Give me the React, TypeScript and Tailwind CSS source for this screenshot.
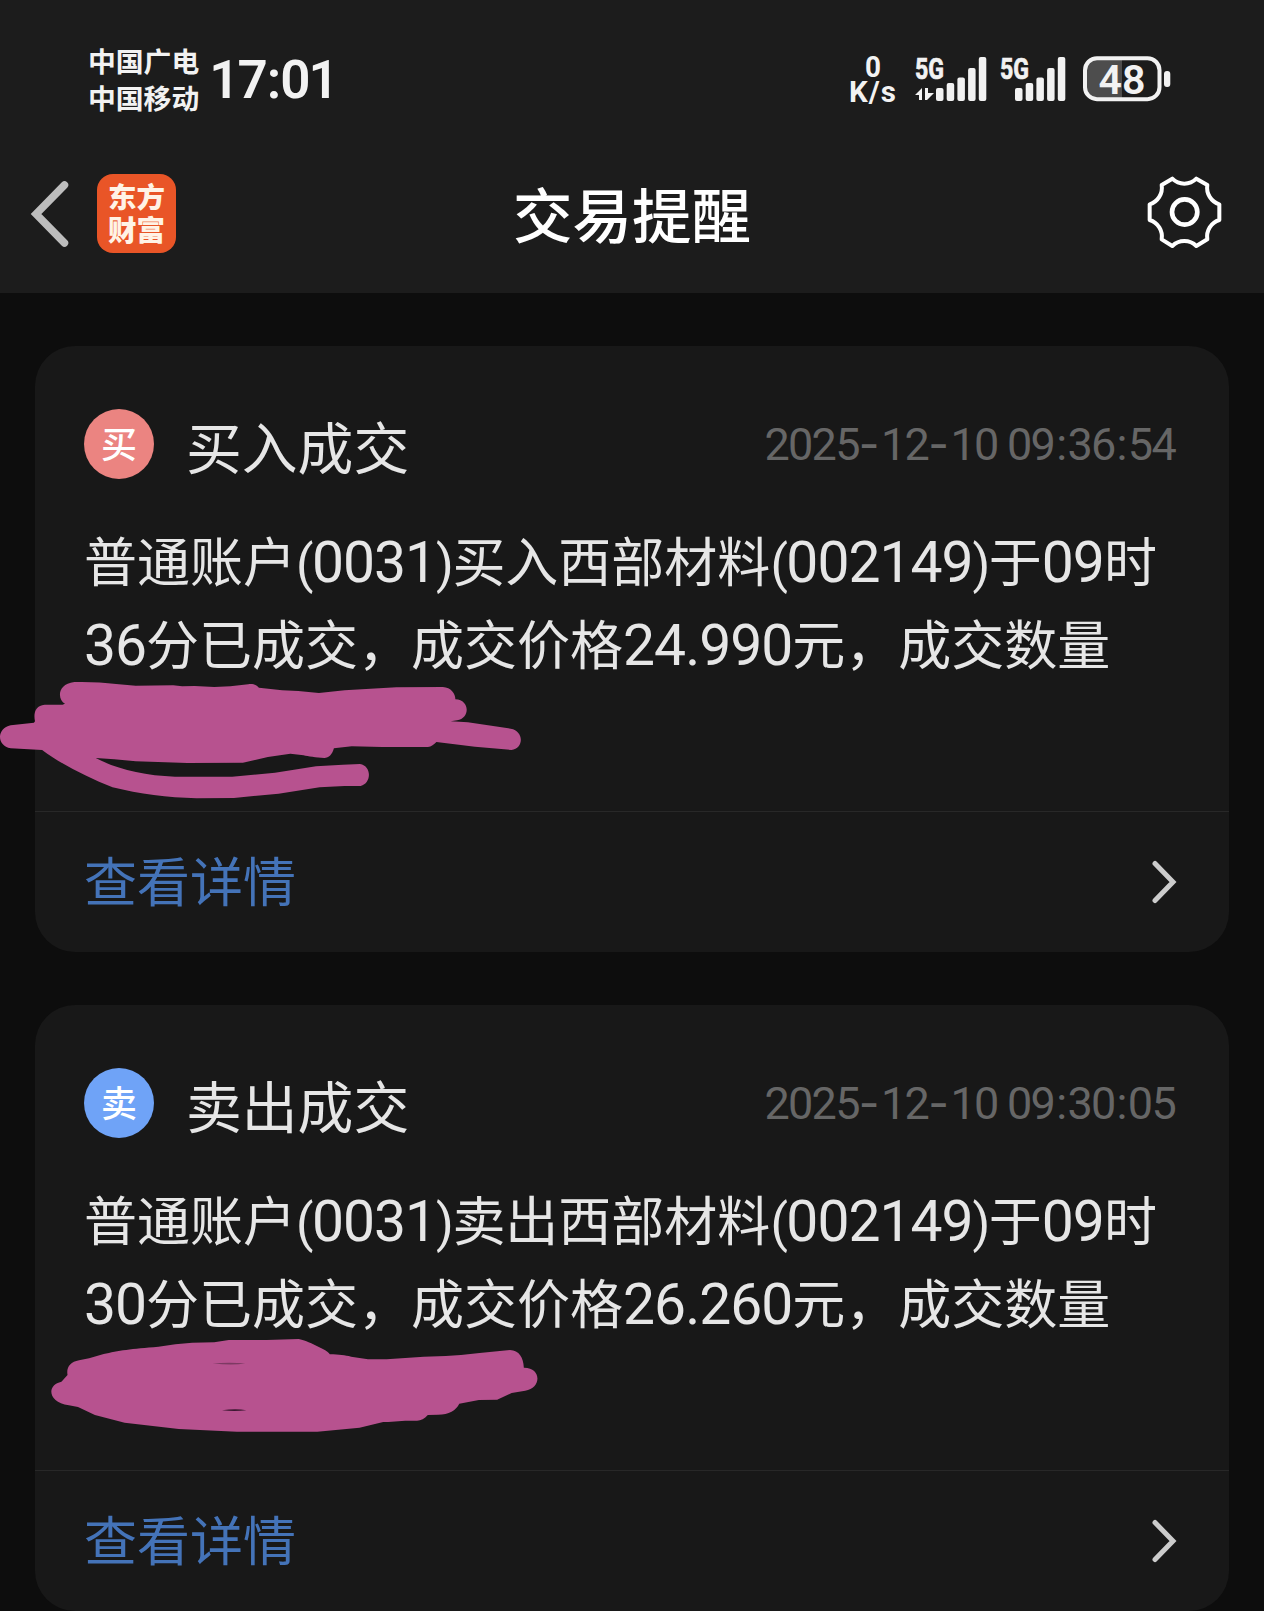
import type { ReactNode } from "react";

type Trade = {
  badge: string;
  badgeClass: string;
  title: string;
  time: string;
  lines: string[];
  scribble: ReactNode;
};

// Digits and brackets are set in Roboto, everything else in the CJK face
function MixedText({ text }: { text: string }) {
  const runs = text.split(/([()]|[0-9.]+)/).filter(Boolean);
  return (
    <>
      {runs.map((run, i) => {
        if (/^[()]$/.test(run)) {
          return (
            <span key={i} className="font-[Roboto,sans-serif] text-[51px] leading-none tracking-[-1.5px]">
              {run}
            </span>
          );
        }
        if (/^[0-9.]+$/.test(run)) {
          return (
            <span key={i} className="font-[Roboto,sans-serif] text-[57px] leading-none tracking-[-1px]">
              {run}
            </span>
          );
        }
        return <span key={i}>{run}</span>;
      })}
    </>
  );
}

function TimeText({ text }: { text: string }) {
  return (
    <span className="whitespace-nowrap pt-[1px] font-[Roboto,sans-serif] text-[45px] leading-[70px] tracking-[-1.7px] text-[#666666]">
      {text.split(/([-:])/).map((part, i) => {
        if (part === "-") {
          return (
            <span key={i} className="font-[Inter,sans-serif] leading-none tracking-[1.5px]">
              -
            </span>
          );
        }
        return (
          <span key={i} className={part === ":" ? "px-[2px]" : ""}>
            {part}
          </span>
        );
      })}
    </span>
  );
}

function BuyScribble() {
  return (
    <svg
      className="absolute left-[-35px] top-[314px]"
      width="560"
      height="160"
      viewBox="0 0 1568 480"
      preserveAspectRatio="none"
      fill="#b7528f"
    >
      <path d="M182 131C160 118 160 72 208 66C250 65 290 67 325 72L380 77L485 76L510 79L545 78L600 81L645 79L695 73C708 70 719 76 725 83L790 91L835 93L893 99L965 91L1110 82L1240 81C1263 83 1275 100 1275 118C1317 120 1316 175 1280 181L1262 184L1310 187L1430 206C1468 213 1467 266 1432 270L1330 260L1222 246C1215 254 1208 260 1198 261L1070 261L985 259L935 265C930 284 921 294 908 294C885 293 862 289 850 286L813 281L750 291L680 308L525 309L380 304L320 298L268 294C320 324 400 347 490 350L650 350L770 338L885 319L960 314L1008 312C1042 318 1040 370 1010 378L965 378L895 382L780 401L655 414L550 415C470 413 390 402 315 382C245 352 175 315 118 270L30 265C-10 258 -10 205 30 196L95 188L98 184C93 158 100 136 125 134L175 134Z" />
    </svg>
  );
}

function SellScribble() {
  return (
    <svg
      className="absolute left-[-5px] top-[315px]"
      width="530"
      height="130"
      viewBox="0 0 1568 390"
      preserveAspectRatio="none"
      fill="#b7528f"
    >
      <path d="M111 165C107 142 119 126 145 121L175 115L218 102C260 92 300 86 380 80L430 73L480 68L545 67L588 60L700 60L795 57C812 61 822 65 832 70L865 86C878 93 884 97 887 103C915 103 932 106 950 110L1000 118L1055 118L1165 110L1230 108L1275 105L1330 99L1420 90C1447 91 1460 113 1461 143C1514 142 1514 205 1465 212L1425 219L1382 239L1328 240L1270 251C1260 271 1240 284 1207 284L1177 285C1166 298 1155 303 1142 302L1110 302L1060 306L1045 306L975 323L850 335L612 335L440 327L280 308L192 285L142 261L115 256C50 245 50 194 93 185Z" />
      <path d="M540 130Q590 127 637 130Q600 137 540 130Z" fill="#7d3a63" />
      <path d="M568 271Q610 265 640 271Q605 275 568 271Z" fill="#3a1730" />
    </svg>
  );
}

const trades: Trade[] = [
  {
    badge: "买",
    badgeClass: "bg-[#eb8481]",
    title: "买入成交",
    time: "2025-12-10 09:36:54",
    lines: ["普通账户(0031)买入西部材料(002149)于09时", "36分已成交，成交价格24.990元，成交数量"],
    scribble: <BuyScribble />,
  },
  {
    badge: "卖",
    badgeClass: "bg-[#6fa3f7]",
    title: "卖出成交",
    time: "2025-12-10 09:30:05",
    lines: ["普通账户(0031)卖出西部材料(002149)于09时", "30分已成交，成交价格26.260元，成交数量"],
    scribble: <SellScribble />,
  },
];

function Signal({ arrows = false }: { arrows?: boolean }) {
  const x = arrows ? 21 : 15;
  return (
    <svg
      width={arrows ? 72 : 66}
      height="46"
      viewBox={arrows ? "0 0 72 46" : "0 0 66 46"}
      fill="#f2f2f2"
      className="overflow-visible"
    >
      <text
        x="0"
        y="22.5"
        textLength="29"
        lengthAdjust="spacingAndGlyphs"
        stroke="#f2f2f2"
        strokeWidth="0.7"
        className="font-[Roboto,sans-serif] text-[30px] font-bold"
      >
        5G
      </text>
      {arrows && <path d="M0 39L7 32V44H4V39ZM10 32H13V37H19L12 44H10Z" />}
      <rect x={x} y="32" width="7.5" height="13" rx="2" />
      <rect x={x + 10.7} y="27" width="7.5" height="18" rx="2" />
      <rect x={x + 21.4} y="21.5" width="7.5" height="23.5" rx="2" />
      <rect x={x + 32.1} y="12" width="7.5" height="33" rx="2" />
      <rect x={x + 42.8} y="1" width="7.5" height="44" rx="2" />
    </svg>
  );
}

function Battery() {
  return (
    <svg width="88" height="46" viewBox="0 0 88 46" className="overflow-visible">
      <path d="M14 3H39V43H14A11 11 0 0 1 3 32V14A11 11 0 0 1 14 3Z" fill="#4d4d4d" />
      <rect x="2" y="2.2" width="74.5" height="41" rx="12" fill="none" stroke="#f2f2f2" strokeWidth="4" />
      <rect x="81" y="15" width="6.3" height="16" rx="3" fill="#f2f2f2" />
      <text
        x="15.5"
        y="37.7"
        textLength="47"
        lengthAdjust="spacingAndGlyphs"
        fill="#f2f2f2"
        className="font-[Roboto,sans-serif] text-[41px] font-semibold"
      >
        48
      </text>
    </svg>
  );
}

function StatusBar() {
  return (
    <div className="flex h-[150px] items-start pl-[88px] text-[#f2f2f2]">
      <div className="mt-[42px] text-[27.8px] font-bold leading-[37px]">
        <div>中国广电</div>
        <div>中国移动</div>
      </div>
      <div className="ml-[10px] mt-[50px] font-[Roboto,sans-serif] text-[53px] font-semibold leading-[60px] tracking-[-2px]">
        17<span className="px-[1px]">:</span>01
      </div>
      <div className="ml-auto mr-[93px] flex pt-[56px]">
        <svg width="48" height="48" viewBox="0 0 48 48" fill="#f2f2f2" className="mr-[17px] overflow-visible">
          <text x="15" y="21" className="font-[Roboto,sans-serif] text-[29px] font-bold" textLength="16" lengthAdjust="spacingAndGlyphs">
            0
          </text>
          <text x="-1" y="45.5" className="font-[Roboto,sans-serif] text-[29.5px] font-bold" textLength="47" lengthAdjust="spacing">
            K/s
          </text>
        </svg>
        <Signal arrows />
        <div className="ml-[13px]">
          <Signal />
        </div>
        <div className="ml-[17px]">
          <Battery />
        </div>
      </div>
    </div>
  );
}

function TitleBar() {
  return (
    <div className="grid h-[143px] grid-cols-[1fr_auto_1fr] items-start">
      <div className="flex items-center pl-[30px] pt-[24px]">
        <svg width="40" height="70" viewBox="0 0 40 70" fill="none" stroke="#bdbdbd" strokeWidth="7.5" strokeLinecap="round">
          <path d="M34.5 6L6 35L34.5 64" />
        </svg>
        <div className="ml-[27px] flex h-[79px] w-[79px] flex-col items-center justify-center rounded-[16px] bg-[#e95527] pb-[4px] text-[28.5px] font-black leading-[33px] text-[#fff3e6]">
          <span>东方</span>
          <span>财富</span>
        </div>
      </div>
      <h1 className="pt-[27px] text-[59.5px] font-medium leading-[70px] text-white">交易提醒</h1>
      <div className="flex justify-end pr-[14px] pt-[10px]">
        <svg width="130" height="110" viewBox="0 0 390 330" fill="none" stroke="#fff" strokeWidth="12" strokeLinejoin="round">
          <path d="M125 75L157 56A51 51 0 0 0 229 56L262 75A52 52 0 0 0 298 133V180A52 52 0 0 0 262 238L229 258A51 51 0 0 0 157 258L125 238A52 52 0 0 0 89 180V133A52 52 0 0 0 125 75Z" />
          <circle cx="194" cy="156" r="38" strokeWidth="14" />
        </svg>
      </div>
    </div>
  );
}

function TradeCard({ trade }: { trade: Trade }) {
  return (
    <article className="relative flex h-[606px] flex-col rounded-[40px] bg-[#181818] text-[#e6e6e6]">
      <div className="flex h-[466px] flex-col border-b border-[#282828] pl-[49px] pt-[63px]">
        <div className="flex h-[70px] items-center pr-[54px]">
          <div
            className={`flex h-[70px] w-[70px] items-center justify-center rounded-full pb-[4px] text-[36px] font-medium leading-[40px] text-white ${trade.badgeClass}`}
          >
            {trade.badge}
          </div>
          <h2 className="ml-[32px] mr-auto pt-[2px] text-[55.8px] leading-[70px]">{trade.title}</h2>
          <TimeText text={trade.time} />
        </div>
        <div className="mt-[39px]">
          {trade.lines.map((line) => (
            <p key={line} className="h-[83px] whitespace-nowrap text-[53px] leading-[83px]">
              <MixedText text={line} />
            </p>
          ))}
        </div>
      </div>
      <a className="flex flex-1 items-center pl-[49px] pr-[51px]">
        <span className="pb-[6px] text-[53px] leading-[70px] text-[#4473b8]">查看详情</span>
        <svg
          className="ml-auto"
          width="26"
          height="44"
          viewBox="0 0 26 44"
          fill="none"
          stroke="#cccccc"
          strokeWidth="5"
          strokeLinecap="round"
        >
          <path d="M3 3.5L21 22L3 40.5" />
        </svg>
      </a>
      {trade.scribble}
    </article>
  );
}

export default function App() {
  return (
    <div className="h-[1611px] w-[1264px] overflow-hidden bg-[#0d0d0d] font-['Noto_Sans_CJK_SC',sans-serif]">
      <header className="h-[293px] bg-[#1c1c1c]">
        <StatusBar />
        <TitleBar />
      </header>
      <main className="flex flex-col gap-[53px] px-[35px] pt-[53px]">
        {trades.map((trade) => (
          <TradeCard key={trade.title} trade={trade} />
        ))}
      </main>
    </div>
  );
}
